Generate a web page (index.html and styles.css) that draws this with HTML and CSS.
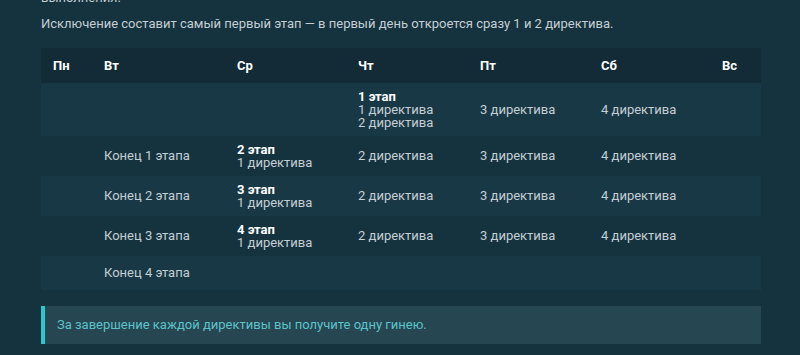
FILE: index.html
```html
<!DOCTYPE html>
<html lang="ru">
<head>
<meta charset="utf-8">
<link rel="stylesheet" href="styles.css">
</head>
<body>
<div class="content">
  <p class="prev">выполнения.</p>
  <p>Исключение составит самый первый этап — в первый день откроется сразу 1 и 2 директива.</p>
  <table class="schedule">
    <colgroup>
      <col class="c-narrow"><col class="c-wide"><col class="c-mid"><col class="c-mid2"><col class="c-mid"><col class="c-mid"><col class="c-narrow">
    </colgroup>
    <thead>
      <tr><th>Пн</th><th>Вт</th><th>Ср</th><th>Чт</th><th>Пт</th><th>Сб</th><th>Вс</th></tr>
    </thead>
    <tbody>
      <tr class="odd">
        <td></td><td></td><td></td>
        <td><div class="stack"><b>1 этап</b><span>1 директива</span><span>2 директива</span></div></td>
        <td>3 директива</td><td>4 директива</td><td></td>
      </tr>
      <tr>
        <td></td><td>Конец 1 этапа</td>
        <td><div class="stack"><b>2 этап</b><span>1 директива</span></div></td>
        <td>2 директива</td><td>3 директива</td><td>4 директива</td><td></td>
      </tr>
      <tr class="odd">
        <td></td><td>Конец 2 этапа</td>
        <td><div class="stack"><b>3 этап</b><span>1 директива</span></div></td>
        <td>2 директива</td><td>3 директива</td><td>4 директива</td><td></td>
      </tr>
      <tr>
        <td></td><td>Конец 3 этапа</td>
        <td><div class="stack"><b>4 этап</b><span>1 директива</span></div></td>
        <td>2 директива</td><td>3 директива</td><td>4 директива</td><td></td>
      </tr>
      <tr class="odd">
        <td></td><td>Конец 4 этапа</td><td></td><td></td><td></td><td></td><td></td>
      </tr>
    </tbody>
  </table>
  <div class="note">За завершение каждой директивы вы получите одну гинею.</div>
</div>
</body>
</html>
```

FILE: styles.css
```css
html, body {
  margin: 0;
  padding: 0;
  background: #15333f;
  height: 100%;
  overflow: hidden;
}
body {
  font-family: Roboto, "Liberation Sans", sans-serif;
  font-size: 13px;
  color: #c4ced3;
}
.content {
  padding: 0 39px 0 41px;
}
.content p {
  margin: 0 0 6px;
  line-height: 20px;
}
.content p.prev {
  margin-top: -12px;
}
.schedule {
  margin-top: 14px;
  width: 720px;
  border-collapse: collapse;
  table-layout: fixed;
}
.c-narrow { width: 51px; }
.c-wide { width: 133px; }
.c-mid { width: 121px; }
.c-mid2 { width: 122px; }
.schedule th {
  background: #132b36;
  color: #ffffff;
  font-weight: 700;
  text-align: left;
  padding: 7px 12px;
  line-height: 21px;
}
.schedule td {
  padding: 7px 12px;
  line-height: 20px;
  vertical-align: middle;
  white-space: nowrap;
}
.schedule tr.odd td {
  background: #193845;
}
.stack {
  display: flex;
  flex-direction: column;
  line-height: 13px;
}
.stack b {
  color: #ffffff;
  font-weight: 700;
}
.note {
  margin-top: 16px;
  width: 692px;
  background: #264651;
  border-left: 4px solid #2bc9cd;
  padding: 9px 12px;
  line-height: 20px;
  color: #5dc3ca;
}
```
